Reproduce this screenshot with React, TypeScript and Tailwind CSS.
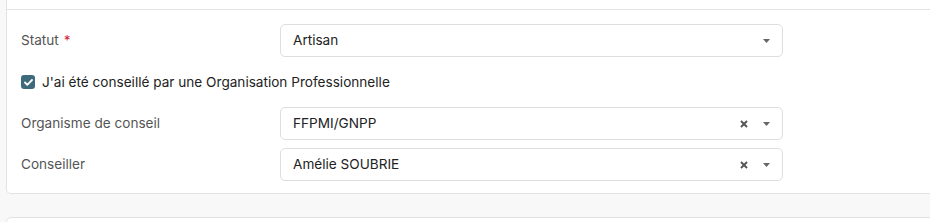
import React from 'react';

type SelectProps = {
  value: string;
  clearable?: boolean;
};

function Caret() {
  return (
    <svg width="7" height="4" viewBox="0 0 7 4" className="text-[#666]">
      <path d="M0 0h7L3.5 4z" fill="currentColor" />
    </svg>
  );
}

function Select({ value, clearable }: SelectProps) {
  return (
    <div className="flex h-[33px] w-[503px] items-center rounded-[5px] border border-[#dedede] bg-white pl-[12px] pr-[12px]">
      <span className="flex-1 text-[13.6px] text-[#222]">{value}</span>
      {clearable && (
        <svg width="8" height="8" viewBox="0 0 8 8" className="mr-[15px] text-[#555]">
          <path d="M1 1l6 6M7 1L1 7" stroke="currentColor" strokeWidth="1.9" />
        </svg>
      )}
      <Caret />
    </div>
  );
}

function Row({ label, children, required }: { label: string; children: React.ReactNode; required?: boolean }) {
  return (
    <div className="flex items-center">
      <label className="w-[259px] text-[13.6px] text-[#555]">
        {label}
        {required && <span className="ml-[5px] text-[#d0263c]">*</span>}
      </label>
      {children}
    </div>
  );
}

export default function App() {
  return (
    <div
      className="h-[222px] w-full overflow-hidden bg-[#f8f8f8]"
      style={{ fontFamily: 'Inter, "Noto Sans", sans-serif' }}
    >
      <div className="ml-[6px] w-[960px] rounded-b-[5px] border border-t-0 border-[#e2e2e2] bg-white">
        <div className="h-[10px] border-b border-[#e2e2e2]" />
        <div className="flex flex-col pl-[14px] pt-[14px] pb-[12px]">
          <Row label="Statut" required>
            <Select value="Artisan" />
          </Row>
          <div className="mt-[15px] mb-[15px] flex h-[20px] items-center">
            <span className="flex h-[14px] w-[14px] items-center justify-center rounded-[3px] bg-[#3f6a7e]">
              <svg width="9" height="7" viewBox="0 0 9 7">
                <path d="M1 3.5l2.3 2.3L8 1" fill="none" stroke="white" strokeWidth="1.8" strokeLinecap="round" strokeLinejoin="round" />
              </svg>
            </span>
            <span className="ml-[7px] text-[13.6px] text-[#222]">
              J'ai été conseillé par une Organisation Professionnelle
            </span>
          </div>
          <div className="flex flex-col gap-[8px]">
            <Row label="Organisme de conseil">
              <Select value="FFPMI/GNPP" clearable />
            </Row>
            <Row label="Conseiller">
              <Select value="Amélie SOUBRIE" clearable />
            </Row>
          </div>
        </div>
      </div>
      <div className="ml-[6px] mt-[23px] h-[20px] w-[960px] rounded-t-[5px] border border-[#e2e2e2] bg-white" />
    </div>
  );
}
